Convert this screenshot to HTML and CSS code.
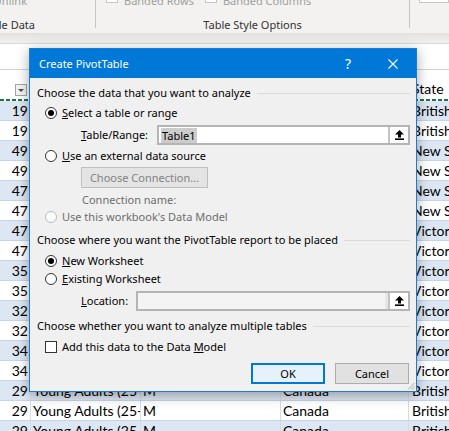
FILE: index.html
```html
<!DOCTYPE html>
<html>
<head>
<meta charset="utf-8">
<title>Create PivotTable</title>
<link rel="stylesheet" href="styles.css">
</head>
<body>
<div class="app">
  <div class="ribbon">
    <div class="group g1">
      <div class="gtop"><span>Unlink</span></div>
      <div class="glabel"><span>External Table Data</span></div>
    </div>
    <div class="group g2">
      <div class="gtop">
        <span class="rcb"></span><span class="rtext">Banded Rows</span>
        <span class="rcb rcb2"></span><span class="rtext">Banded Columns</span>
      </div>
      <div class="glabel"><span>Table Style Options</span></div>
    </div>
    <div class="group g3">
      <div class="gtop"><span class="rbox"></span></div>
    </div>
  </div>
  <div class="shade"></div>
  <div class="formula"></div>

  <div class="sheet">
    <div class="hdr">
      <div class="c hc0"><span class="filter"><span class="tri"></span></span></div>
      <div class="c">Age_Group</div>
      <div class="c">Customer_Gender</div>
      <div class="c">Country</div>
      <div class="c last">State</div>
    </div>
    <div class="ants"></div>
    <div class="row band"><div class="c num">19</div><div class="c">Youth (&lt;25)</div><div class="c">M</div><div class="c">Canada</div><div class="c last">British Columbia</div></div>
    <div class="row"><div class="c num">19</div><div class="c">Youth (&lt;25)</div><div class="c">M</div><div class="c">Canada</div><div class="c last">British Columbia</div></div>
    <div class="row band"><div class="c num">49</div><div class="c">Adults (35-64)</div><div class="c">M</div><div class="c">Australia</div><div class="c last">New South Wales</div></div>
    <div class="row"><div class="c num">49</div><div class="c">Adults (35-64)</div><div class="c">M</div><div class="c">Australia</div><div class="c last">New South Wales</div></div>
    <div class="row band"><div class="c num">47</div><div class="c">Adults (35-64)</div><div class="c">F</div><div class="c">Australia</div><div class="c last">New South Wales</div></div>
    <div class="row"><div class="c num">47</div><div class="c">Adults (35-64)</div><div class="c">F</div><div class="c">Australia</div><div class="c last">New South Wales</div></div>
    <div class="row band"><div class="c num">47</div><div class="c">Adults (35-64)</div><div class="c">F</div><div class="c">Australia</div><div class="c last">Victoria</div></div>
    <div class="row"><div class="c num">47</div><div class="c">Adults (35-64)</div><div class="c">F</div><div class="c">Australia</div><div class="c last">Victoria</div></div>
    <div class="row band"><div class="c num">35</div><div class="c">Adults (35-64)</div><div class="c">M</div><div class="c">Australia</div><div class="c last">Victoria</div></div>
    <div class="row"><div class="c num">35</div><div class="c">Adults (35-64)</div><div class="c">M</div><div class="c">Australia</div><div class="c last">Victoria</div></div>
    <div class="row band"><div class="c num">32</div><div class="c">Young Adults (25-34)</div><div class="c">M</div><div class="c">Australia</div><div class="c last">Victoria</div></div>
    <div class="row"><div class="c num">32</div><div class="c">Young Adults (25-34)</div><div class="c">M</div><div class="c">Australia</div><div class="c last">Victoria</div></div>
    <div class="row band"><div class="c num">34</div><div class="c">Young Adults (25-34)</div><div class="c">F</div><div class="c">Australia</div><div class="c last">Victoria</div></div>
    <div class="row"><div class="c num">34</div><div class="c">Young Adults (25-34)</div><div class="c">F</div><div class="c">Australia</div><div class="c last">Victoria</div></div>
    <div class="row band"><div class="c num">29</div><div class="c">Young Adults (25-34)</div><div class="c">M</div><div class="c">Canada</div><div class="c last">British Columbia</div></div>
    <div class="row"><div class="c num">29</div><div class="c">Young Adults (25-34)</div><div class="c">M</div><div class="c">Canada</div><div class="c last">British Columbia</div></div>
    <div class="row band"><div class="c num">29</div><div class="c">Young Adults (25-34)</div><div class="c">M</div><div class="c">Canada</div><div class="c last">British Columbia</div></div>
  </div>

  <div class="dialog">
    <div class="titlebar">
      <span class="title">Create PivotTable</span>
      <span class="help">?</span>
      <svg class="close" width="10" height="10" viewBox="0 0 10 10"><path d="M0.5 0.5 L9.5 9.5 M9.5 0.5 L0.5 9.5" stroke="#fff" stroke-width="1.1" fill="none"/></svg>
    </div>
    <div class="dbody">
      <div class="legend">Choose the data that you want to analyze</div>
      <div class="opt sp4"><span class="radio on"></span><span><u>S</u>elect a table or range</span></div>
      <div class="frow sp4">
        <span class="flabel wide"><u>T</u>able/Range:</span>
        <div class="refedit">
          <div class="reftext"><span class="sel">Table1</span></div>
          <span class="refbtn"><svg width="9" height="10" viewBox="0 0 9 10"><path d="M4.5 0 L9 4.6 H6 V7.4 H3 V4.6 H0 Z" fill="#000"/><rect x="0" y="8.4" width="9" height="1.6" fill="#000"/></svg></span>
        </div>
      </div>
      <div class="opt sp3"><span class="radio"></span><span><u>U</u>se an external data source</span></div>
      <div class="connbtn sp3">Choose Connection...</div>
      <div class="connname sp4">Connection name:</div>
      <div class="opt dis sp1"><span class="radio off"></span><span>Use this workbook's Data Model</span></div>

      <div class="legend sp7">Choose where you want the PivotTable report to be placed</div>
      <div class="opt sp5"><span class="radio on"></span><span><u>N</u>ew Worksheet</span></div>
      <div class="opt sp2"><span class="radio"></span><span><u>E</u>xisting Worksheet</span></div>
      <div class="frow loc sp4">
        <span class="flabel"><u>L</u>ocation:</span>
        <div class="refedit disabled">
          <div class="reftext"></div>
          <span class="refbtn"><svg width="9" height="10" viewBox="0 0 9 10"><path d="M4.5 0 L9 4.6 H6 V7.4 H3 V4.6 H0 Z" fill="#000"/><rect x="0" y="8.4" width="9" height="1.6" fill="#000"/></svg></span>
        </div>
      </div>

      <div class="legend sp7">Choose whether you want to analyze multiple tables</div>
      <div class="opt sp5"><span class="check"></span><span>Add this data to the Data <u>M</u>odel</span></div>

      <div class="buttons">
        <span class="btn default">OK</span>
        <span class="btn">Cancel</span>
      </div>
    </div>
    <svg class="grip" width="8" height="8" viewBox="0 0 8 8"><path d="M7.5 1 L1 7.5 M7.5 4 L4 7.5 M7.5 6.5 L6.5 7.5" stroke="#a8a8a8" stroke-width="1" fill="none"/></svg>
  </div>
</div>
</body>
</html>
```
FILE: styles.css
```css
* { box-sizing: border-box; }
html, body { margin: 0; padding: 0; }
body {
  width: 449px;
  height: 431px;
  overflow: hidden;
  background: #fff;
  font-family: "Noto Sans", "DejaVu Sans", sans-serif;
  font-size: 11px;
  color: #000;
}
.app { position: relative; width: 449px; height: 431px; overflow: hidden; }

/* ribbon */
.ribbon { height: 33px; background: #f3f2f1; display: flex; }
.group {
  height: 28px;
  border-right: 1px solid #c8c6c4;
  display: flex;
  flex-direction: column;
  justify-content: space-between;
}
.g1 { width: 96px; }
.g2 { width: 326px; }
.g3 { flex: 1; border-right: none; }
.gtop {
  display: flex;
  align-items: center;
  height: 14px;
  margin-top: -6px;
  line-height: 14px;
  color: #a19f9d;
  white-space: nowrap;
}
.glabel {
  display: flex;
  line-height: 14px;
  margin-bottom: -4px;
  white-space: nowrap;
  color: #323130;
}
.g1 .gtop { justify-content: flex-end; padding-right: 68px; }
.g1 .glabel { justify-content: flex-end; padding-right: 60px; }
.g2 .gtop { padding-left: 10px; }
.g2 .glabel { justify-content: center; }
.g3 .gtop { padding-left: 9px; }
.rcb {
  width: 12px; height: 12px;
  border: 1px solid #c8c6c4;
  background: #fff;
  flex: none;
  align-self: flex-start;
  margin-top: -3px;
}
.rcb2 { margin-left: 11px; }
.rtext { margin-left: 6px; }
.rbox {
  width: 30px; height: 12px;
  border: 1px solid #c8c6c4;
  background: #fff;
  align-self: flex-start;
  margin-top: -3px;
}

.shade {
  height: 11px;
  background: linear-gradient(#e2e1e0, #f0f0f0);
  border-bottom: 1px solid #d8d8d8;
}
.formula { height: 25px; background: #fff; }

/* sheet */
.sheet {
  border-top: 1px solid #d4d4d4;
  font-family: "Lato", "Liberation Sans", sans-serif;
  font-size: 14px;
  color: #000;
}
.hdr, .row {
  display: grid;
  grid-template-columns: 31px 110px 140px 128px 1fr;
}
.hdr { height: 29px; background: #fff; }
.hdr .c { display: flex; align-items: flex-end; line-height: 19px; border-right: none; padding-bottom: 1px; }
.hdr .hc0 { justify-content: flex-end; padding-right: 4px; padding-bottom: 3px; }
.filter {
  width: 12px; height: 12px;
  border: 1px solid #a6a6a6;
  background: #f4f4f4;
  display: flex; align-items: center; justify-content: center;
}
.tri {
  width: 0; height: 0;
  border-left: 3px solid transparent;
  border-right: 3px solid transparent;
  border-top: 3px solid #505050;
}
.ants {
  height: 2px;
  background: repeating-linear-gradient(90deg, #217346 0 4px, #ffffff 4px 6px);
}
.row { height: 20px; border-bottom: 1px solid #c3d5ea; background: #fff; }
.row.band { background: #dde7f3; }
.c {
  border-right: 1px solid #d3dbe6;
  padding: 0 2px;
  line-height: 19px;
  white-space: nowrap;
  overflow: hidden;
}
.c.num { text-align: right; }
.c.last { border-right: none; padding-left: 3px; }

/* dialog */
.dialog {
  position: absolute;
  left: 29px;
  top: 48px;
  width: 388px;
  height: 344px;
  border: 1px solid #1c7bd5;
  background: #f0f0f0;
  box-shadow: 0 3px 12px rgba(0, 0, 0, 0.35);
  font-family: "Noto Sans", "DejaVu Sans", sans-serif;
  font-size: 11px;
  color: #000;
}
.titlebar {
  height: 29px;
  background: #0078d7;
  color: #fff;
  display: flex;
  align-items: center;
  padding-left: 9px;
}
.title { flex: 1; }
.help { font-size: 14px; margin-right: 37px; line-height: 16px; }
.close { margin-right: 18px; flex: none; }

.dbody { padding: 7px 6px 0 7px; }
.legend {
  display: flex;
  align-items: center;
  height: 16px;
  line-height: 16px;
  white-space: nowrap;
}
.legend::after {
  content: "";
  flex: 1;
  height: 1px;
  background: #dadada;
  margin-left: 6px;
}
.sp1 { margin-top: 1px; }
.sp2 { margin-top: 2px; }
.sp3 { margin-top: 3px; }
.sp4 { margin-top: 4px; }
.sp5 { margin-top: 5px; }
.sp7 { margin-top: 7px; }

u { text-underline-offset: 1px; text-decoration-thickness: 1px; }

.opt {
  display: flex;
  align-items: center;
  height: 16px;
  line-height: 16px;
  padding-left: 8px;
  gap: 5px;
  white-space: nowrap;
}
.opt.dis { color: #6d6d6d; }
.radio {
  width: 12px; height: 12px;
  border-radius: 50%;
  border: 1px solid #333;
  background: #fff;
  display: flex; align-items: center; justify-content: center;
  flex: none;
}
.radio.on::after {
  content: "";
  width: 6px; height: 6px;
  border-radius: 50%;
  background: #000;
}
.radio.off { border-color: #bcbcbc; background: #fbfbfb; }
.check {
  width: 12px; height: 12px;
  border: 1px solid #333;
  background: #fff;
  flex: none;
}

.frow {
  display: flex;
  align-items: center;
  height: 20px;
  padding-left: 44px;
}
.flabel { width: 55px; flex: none; line-height: 16px; white-space: nowrap; }
.flabel.wide { width: 76px; }
.refedit {
  flex: 1;
  height: 20px;
  display: flex;
  border: 2px solid #b4b4b4;
  background: #fff;
}
.reftext { flex: 1; display: flex; align-items: center; padding-left: 2px; }
.sel { background: #cccccc; line-height: 15px; padding: 0 1px; }
.refbtn {
  width: 20px;
  flex: none;
  border-left: 2px solid #c4c4c4;
  background: #fff;
  display: flex; align-items: center; justify-content: center;
}
.refedit.disabled { background: #e6e6e6; }
.refedit.disabled .reftext { background: #f4f4f4; margin-right: 3px; }

.connbtn {
  margin-left: 44px;
  width: 127px;
  height: 21px;
  border: 1px solid #bfbfbf;
  background: #e4e4e4;
  color: #838383;
  display: flex; align-items: center; justify-content: center;
}
.connname { padding-left: 45px; height: 16px; line-height: 16px; color: #6d6d6d; }

.buttons {
  margin-top: 8px;
  display: flex;
  justify-content: flex-end;
  gap: 10px;
  padding-right: 1px;
}
.btn {
  width: 74px; height: 21px;
  border: 1px solid #adadad;
  background: #e1e1e1;
  display: flex; align-items: center; justify-content: center;
}
.btn.default { border: 2px solid #0078d7; background: #e5f1fb; }
.grip { position: absolute; right: 1px; bottom: 1px; }
```
